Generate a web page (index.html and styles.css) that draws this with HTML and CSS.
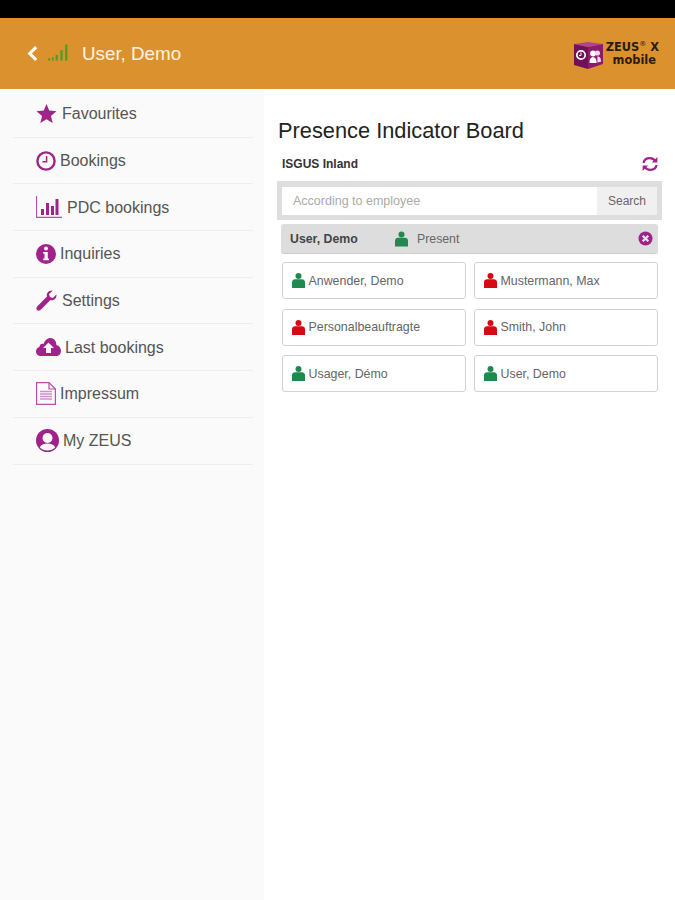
FILE: index.html
```html
<!DOCTYPE html>
<html lang="en">
<head>
    <meta charset="UTF-8">
    <meta name="viewport" content="width=device-width, initial-scale=1.0">
    <title>Presence Indicator Board</title>
    <link rel="stylesheet" href="styles.css">
</head>
<body>
    <svg class="sprites" width="0" height="0">
        <symbol id="person" viewBox="0 0 13 15">
            <circle cx="6.5" cy="3" r="3"/>
            <path d="M0 15V9.4C0 7.4 1.4 6.2 3 6.2H10C11.6 6.2 13 7.4 13 9.4V15Z"/>
        </symbol>
    </svg>
    <div class="statusbar"></div>
    <header class="topbar">
        <div class="topbar-left">
            <svg class="back" viewBox="0 0 12 18"><path d="M10 2 3 9l7 7" fill="none" stroke="#fff" stroke-width="3.4"/></svg>
            <svg class="signal" viewBox="0 0 21 17" fill="#4da024">
                <rect x="0" y="14.5" width="2" height="2.5"/>
                <rect x="4" y="13.5" width="2" height="3.5"/>
                <rect x="8" y="11" width="2.4" height="6"/>
                <rect x="13" y="6" width="2.4" height="11"/>
                <rect x="18" y="0" width="2.4" height="17"/>
            </svg>
            <span class="topbar-title">User, Demo</span>
        </div>
        <div class="logo">
            <svg class="logo-cube" viewBox="0 0 29 27">
                <path d="M0 2 14 0 29 2 14 5Z" fill="#b0458f"/>
                <path d="M0 2 14 5V27L0 23Z" fill="#6f1058"/>
                <path d="M14 5 29 2V22L14 27Z" fill="#8e1a6c"/>
                <circle cx="7" cy="13" r="4.2" fill="none" stroke="#fff" stroke-width="1.7"/>
                <path d="M7 10.5V13.5H5" fill="none" stroke="#fff"/>
                <circle cx="19" cy="11.5" r="2.9" fill="#fff"/>
                <circle cx="23.4" cy="11" r="2.6" fill="#f0d8ea"/>
                <path d="M15.5 21C15.5 16.5 17 15.2 19 15.2S22.6 16.5 22.6 21Z" fill="#fff"/>
                <path d="M23.4 20.4V14.6C25.6 14.6 27 15.6 27 19.8Z" fill="#f0d8ea"/>
            </svg>
            <div class="logo-text">
                <div>ZEUS<sup>®</sup> X</div>
                <div class="logo-sub">mobile</div>
            </div>
        </div>
    </header>
    <div class="layout">
        <nav class="sidebar">
            <a class="nav-item">
                <svg class="nav-icon" viewBox="0 0 20 20" width="21" height="20"><path d="M10 0 12.7 6.6 20 7.2 14.4 11.9 16.2 19 10 15.2 3.8 19 5.6 11.9 0 7.2 7.3 6.6Z"/></svg>
                <span class="label-md">Favourites</span>
            </a>
            <a class="nav-item">
                <svg class="nav-icon" viewBox="0 0 20 20" width="20" height="20"><circle cx="10" cy="10" r="8.6" fill="none" stroke="#a1228a" stroke-width="2.4"/><path d="M10.6 5V10.8H6.5" fill="none" stroke="#a1228a" stroke-width="1.5"/></svg>
                <span class="label-sm">Bookings</span>
            </a>
            <a class="nav-item">
                <svg class="nav-icon" viewBox="0 0 26 22" width="26" height="22"><path d="M.5 0V21.3H26" fill="none" stroke="#b84fa3" stroke-width="1.2"/><rect x="5" y="13" width="3" height="6"/><rect x="10" y="7" width="3" height="12"/><rect x="15" y="10" width="3" height="9"/><rect x="19.5" y="3" width="3" height="16"/></svg>
                <span class="label-md">PDC bookings</span>
            </a>
            <a class="nav-item">
                <svg class="nav-icon" viewBox="0 0 20 20" width="20" height="20"><circle cx="10" cy="10" r="10"/><circle cx="10" cy="4.6" r="2" fill="#fafafa"/><path d="M7.2 8H11.8V14.4H13V16.2H7.2V14.4H8.5V9.8H7.2Z" fill="#fafafa"/></svg>
                <span class="label-sm">Inquiries</span>
            </a>
            <a class="nav-item">
                <svg class="nav-icon" viewBox="0 0 21 21" width="21" height="21"><path d="M20.4 4.4C21 7.8 18 11 14.4 10L5 19.6C3.8 20.9 1.9 20.9 1 20 .1 19.1.2 17.4 1.4 16.2L11 6.6C10 3 13.2 0 16.6.6L13 4.2 14 7 16.8 8Z"/></svg>
                <span class="label-md">Settings</span>
            </a>
            <a class="nav-item">
                <svg class="nav-icon" viewBox="0 0 25 18" width="25" height="18"><path d="M5 18C2 18 0 16 0 13.4 0 11 1.6 9.4 3.4 9 3.6 6.6 5.6 5.4 7.6 6 8.8 2.4 11.4 0 14.4 0 18 0 20.4 3 20.4 7 23 7.6 25 10 25 13 25 16 22.8 18 20 18Z"/><path d="M12.5 4.4 18 10H15V15H10V10H7Z" fill="#fafafa"/></svg>
                <span class="label-sm">Last bookings</span>
            </a>
            <a class="nav-item">
                <svg class="nav-icon" viewBox="0 0 20 23" width="20" height="23"><path d="M.6.6H13L19.4 7V22.4H.6Z" fill="#fafafa" stroke="#b84fa3" stroke-width="1.2"/><path d="M13 .6V7H19.4" fill="none" stroke="#b84fa3" stroke-width="1.2"/><path d="M4 9.5H16M4 12H16M4 14.5H16M4 17H16" stroke="#cf93c3" stroke-width="1.4"/></svg>
                <span class="label-sm">Impressum</span>
            </a>
            <a class="nav-item">
                <svg class="nav-icon" viewBox="0 0 23 23" width="23" height="23"><circle cx="11.5" cy="11.5" r="11.5"/><circle cx="11.5" cy="9" r="5" fill="#fafafa"/><path d="M3.8 18.6C5 15.6 8 14.6 11.5 14.6S18 15.6 19.2 18.6C17.2 20.6 14.6 21.4 11.5 21.4S5.8 20.6 3.8 18.6Z" fill="#fafafa"/></svg>
                <span class="label-sm">My ZEUS</span>
            </a>
        </nav>
        <main class="content">
            <h1 class="page-title">Presence Indicator Board</h1>
            <div class="group-row">
                <span class="group-name">ISGUS Inland</span>
                <svg class="refresh" viewBox="0 0 16 16" fill="none" stroke="#a1228a" stroke-width="2.2">
                    <path d="M1.5 7C2 4 4.5 2.2 7.8 2.2 10.2 2.2 12 3.2 13.4 5.2"/>
                    <path d="M14.6 9C14 12 11.5 13.8 8.2 13.8 5.8 13.8 4 12.8 2.6 10.8"/>
                    <path d="M15.4 1V6.6H9.8Z" fill="#a1228a" stroke="none"/>
                    <path d="M.6 15V9.4H6.2Z" fill="#a1228a" stroke="none"/>
                </svg>
            </div>
            <div class="search-band">
                <input class="search-input" type="text" placeholder="According to employee">
                <button class="search-btn" type="button">Search</button>
            </div>
            <div class="me-row">
                <span class="me-name">User, Demo</span>
                <svg class="person person-lg green"><use href="#person"/></svg>
                <span class="me-status">Present</span>
                <svg class="close" viewBox="0 0 16 16"><circle cx="8" cy="8" r="7.5" fill="#a1228a"/><path d="M5 5 11 11M11 5 5 11" stroke="#e4e4e4" stroke-width="2.4"/></svg>
            </div>
            <div class="people">
                <div class="person-card"><svg class="person green"><use href="#person"/></svg>Anwender, Demo</div>
                <div class="person-card"><svg class="person red"><use href="#person"/></svg>Mustermann, Max</div>
                <div class="person-card"><svg class="person red"><use href="#person"/></svg>Personalbeauftragte</div>
                <div class="person-card"><svg class="person red"><use href="#person"/></svg>Smith, John</div>
                <div class="person-card"><svg class="person green"><use href="#person"/></svg>Usager, Démo</div>
                <div class="person-card"><svg class="person green"><use href="#person"/></svg>User, Demo</div>
            </div>
        </main>
    </div>
</body>
</html>
```

FILE: styles.css
```css
* {
    box-sizing: border-box;
}

html, body {
    height: 100%;
}

body {
    margin: 0;
    font-family: "Liberation Sans", Arial, sans-serif;
    color: #333;
    background: #fff;
    display: flex;
    flex-direction: column;
    overflow: hidden;
}

.sprites {
    display: none;
}

.statusbar {
    height: 18px;
    background: #000;
}

.topbar {
    height: 71px;
    background: #dc912f;
    display: flex;
    align-items: center;
    justify-content: space-between;
    padding: 0 16px 0 27px;
    flex-shrink: 0;
}

.topbar-left {
    display: flex;
    align-items: center;
}

.back {
    width: 11px;
    height: 17px;
}

.signal {
    width: 20px;
    height: 17px;
    margin: -3px 0 0 10px;
}

.topbar-title {
    color: #fdf3e2;
    font-size: 18.8px;
    margin-left: 14px;
}

.logo {
    display: flex;
    align-items: center;
    margin-top: 3px;
}

.logo-cube {
    width: 29px;
    height: 27px;
}

.logo-text {
    font-family: "DejaVu Sans", sans-serif;
    font-weight: bold;
    font-size: 11.4px;
    line-height: 13px;
    color: #2a1c10;
    margin: -3px 0 0 3px;
    text-align: right;
}

.logo-text sup {
    font-size: 7px;
    font-weight: normal;
    line-height: 0;
}

.logo-sub {
    padding-right: 3px;
}

.layout {
    flex: 1;
    display: flex;
}

.sidebar {
    width: 264px;
    background: #fafafa;
    padding: 2px 11px 0 13px;
    flex-shrink: 0;
}

.nav-item {
    height: 46.7px;
    display: flex;
    align-items: center;
    padding-left: 23px;
    border-bottom: 1px solid #eeeeee;
    font-size: 16px;
    color: #555;
}

.nav-item span {
    margin-top: 1px;
}

.nav-icon {
    fill: #a1228a;
    flex-shrink: 0;
}

.label-sm { margin-left: 4px; }
.label-md { margin-left: 5px; }

.content {
    flex: 1;
    padding: 0 13px 0 13px;
}

.page-title {
    margin: 30px 0 0 1px;
    font-size: 21.8px;
    line-height: 24px;
    font-weight: normal;
    color: #222;
}

.group-row {
    display: flex;
    align-items: center;
    justify-content: space-between;
    margin: 12px 4px 0 5px;
    height: 18px;
}

.group-name {
    font-size: 12px;
    font-weight: bold;
    color: #333;
}

.refresh {
    width: 16px;
    height: 16px;
}

.search-band {
    display: flex;
    background: #dedede;
    margin-top: 8px;
    padding: 6px 5px 5px 5px;
    height: 39px;
}

.search-input {
    flex: 1;
    min-width: 0;
    border: none;
    background: #fff;
    padding: 0 11px;
    font: 12.5px "Liberation Sans", Arial, sans-serif;
    outline: none;
}

.search-input::placeholder {
    color: #aaa;
}

.search-btn {
    width: 60px;
    border: none;
    background: #f0f0f0;
    color: #666;
    font: 12px "Liberation Sans", Arial, sans-serif;
    padding: 0;
}

.me-row {
    display: flex;
    align-items: center;
    height: 30px;
    margin: 4px 4px 0 4px;
    padding: 0 5px 0 9px;
    background: #dddddd;
    border-radius: 3px;
    border-bottom: 1px solid #ccc;
    font-size: 12.3px;
}

.me-name {
    font-weight: bold;
    color: #444;
    width: 105px;
}

.person {
    width: 13px;
    height: 15px;
    flex-shrink: 0;
}

.person-lg {
    height: 16px;
}

.green { fill: #1f8a50; }
.red { fill: #d40a14; }

.me-status {
    margin-left: 9px;
    color: #666;
    flex: 1;
}

.close {
    width: 15px;
    height: 15px;
}

.people {
    display: grid;
    grid-template-columns: 1fr 1fr;
    gap: 9.5px 8px;
    margin: 8px 4px 0 5px;
}

.person-card {
    height: 37px;
    display: flex;
    align-items: center;
    gap: 3.5px;
    padding-left: 9px;
    border: 1px solid #d2d2d2;
    border-radius: 3px;
    font-size: 12.4px;
    color: #666;
    background: #fff;
}
```
